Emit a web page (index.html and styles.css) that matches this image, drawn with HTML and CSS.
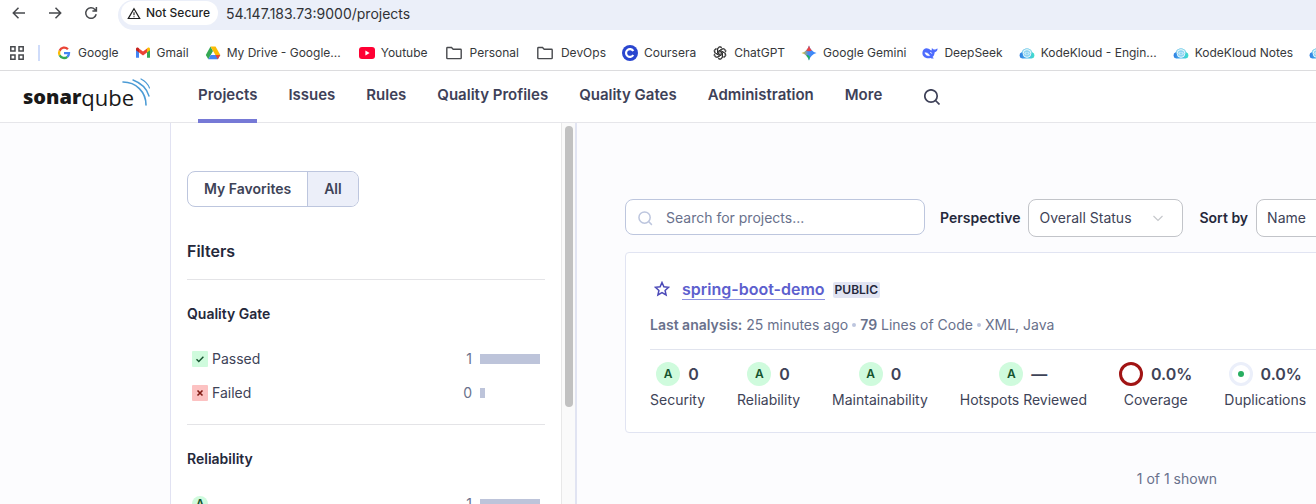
FILE: index.html
```html
<!DOCTYPE html>
<html lang="en">
<head>
<meta charset="utf-8">
<title>Projects</title>
<link rel="stylesheet" href="styles.css">
</head>
<body>
<svg class="defs" aria-hidden="true">
  <defs>
    <linearGradient id="cloud" x1="0" x2="1" y1="0" y2="0"><stop offset="0" stop-color="#2f7de0"/><stop offset=".5" stop-color="#46b4ee"/><stop offset="1" stop-color="#3fe0c8"/></linearGradient>
    <linearGradient id="gem" x1="0" x2="1" y1="0" y2="0"><stop offset="0" stop-color="#f9c80e"/><stop offset=".45" stop-color="#4a8af0"/><stop offset="1" stop-color="#3186ff"/></linearGradient>
    <symbol id="kode" viewBox="0 0 16 16"><path d="M3.300 13.500A3.200 3.200 0 0 1 2.700 7.300C3.500 5 5.500 3.500 8 3.500s4.500 1.500 5.300 3.800a3.200 3.200 0 0 1-.6 6.200z" fill="url(#cloud)"/><path d="M2.700 7.300C3.500 5 5.500 3.500 8 3.500s4.500 1.500 5.300 3.800l-1.300.7H4z" fill="#8fd9ea"/><circle cx="8" cy="8.500" r="3.900" fill="#8fd4f2" stroke="#fff" stroke-width=".8"/><path d="M7.200 7.200 6 8.500l1.200 1.300M8.800 7.200 10 8.500 8.800 9.800" fill="none" stroke="#fff" stroke-width=".9"/></symbol>
    <symbol id="folder" viewBox="0 0 16 16"><path d="M.8 3.200q0-.7.7-.7h4l1.700 1.700h7.300q.7 0 .7.7v8q0 .7-.7.7h-13q-.7 0-.7-.7z" fill="none" stroke="#47494d" stroke-width="1.400"/></symbol>
  </defs>
</svg>

<div class="toolbar">
  <div class="toolbar-buttons">
    <button class="tool" aria-label="Back"><svg viewBox="0 0 16 16"><path d="M14 8H2.500M7.500 2.800 2.300 8l5.200 5.200"/></svg></button>
    <button class="tool" aria-label="Forward"><svg viewBox="0 0 16 16"><path d="M2 8h11.500M8.500 2.800 13.700 8l-5.200 5.200"/></svg></button>
    <button class="tool" aria-label="Reload"><svg viewBox="0 0 16 16"><path d="M13.200 9.300A5.300 5.300 0 1 1 11.900 4.400L13.300 5.800M13.400 2v4H9.400"/></svg></button>
  </div>
  <div class="address">
    <button class="security"><svg viewBox="0 0 16 14"><path d="M8 1.600 14.500 12.700h-13z" fill="none" stroke="#1f1f1f" stroke-width="1.400"/><path d="M8 5.500v3.500M8 10v1.400" stroke="#1f1f1f" stroke-width="1.300"/></svg>Not Secure</button>
    <input class="url" type="text" aria-label="Address" value="54.147.183.73:9000/projects">
  </div>
</div>

<nav class="bookmarks" aria-label="Bookmarks">
  <div class="apps-group">
    <button class="apps" aria-label="Apps"><svg viewBox="0 0 14 14"><path d="M.8.8h4.200v4.200H.8zM9 .8h4.200v4.200H9zM.8 9h4.200v4.200H.8zM9 9h4.200v4.200H9z" fill="none" stroke="#47494d" stroke-width="1.500"/></svg></button>
    <span class="apps-rule"></span>
  </div>
  <a href="#" class="bookmark"><svg viewBox="0 0 16 16"><g fill="none" stroke-width="2.300"><path d="M11.900 4.300A5 5 0 0 0 3.600 5.700" stroke="#ea4335"/><path d="M3.600 5.700a5 5 0 0 0 0 4.600" stroke="#fbbc05"/><path d="M3.600 10.300a5 5 0 0 0 7.700 1.500" stroke="#34a853"/><path d="M11.300 11.800A5 5 0 0 0 13 8.200H8" stroke="#4285f4"/></g></svg>Google</a>
  <a href="#" class="bookmark"><svg viewBox="0 0 16 16"><path d="M1 3.500v9.300h3V7z" fill="#4285f4"/><path d="M15 3.500v9.300h-3V7z" fill="#34a853"/><path d="M4 7.500v-4l4 3 4-3v4l-4 3z" fill="#ea4335"/><path d="M1 5.200V4c0-1.300 1.500-1.900 2.500-1.100l.5.400v4.200z" fill="#c5221f"/><path d="M15 5.200V4c0-1.300-1.500-1.900-2.500-1.100l-.5.400v4.200z" fill="#fbbc04"/></svg>Gmail</a>
  <a href="#" class="bookmark"><svg viewBox="0 0 16 16"><path d="M5.500 1.500 8 6 3.300 14.200.8 10z" fill="#34a853"/><path d="M5.500 1.500h5L15.300 10h-4.900z" fill="#fbbc04"/><path d="M3.300 14.200 5.700 10h9.600l-2.500 4.200z" fill="#4285f4"/><path d="m10.400 10h4.900l-2.500 4.200z" fill="#ea4335"/></svg>My Drive - Google...</a>
  <a href="#" class="bookmark bookmark-spaced"><svg viewBox="0 0 16 16"><rect y="2" width="16" height="12" rx="3" fill="#ff0033"/><path d="M6.400 5.600 10.600 8l-4.200 2.400z" fill="#fff"/></svg>Youtube</a>
  <a href="#" class="bookmark bookmark-folder"><svg><use href="#folder"/></svg>Personal</a>
  <a href="#" class="bookmark bookmark-folder"><svg><use href="#folder"/></svg>DevOps</a>
  <a href="#" class="bookmark"><svg viewBox="0 0 16 16"><circle cx="8" cy="8" r="8" fill="#2a46cf"/><path d="M11.300 6A3.900 3.900 0 1 0 11.300 10" fill="none" stroke="#fff" stroke-width="2.200"/></svg>Coursera</a>
  <a href="#" class="bookmark"><svg viewBox="-1 -1 18 18"><g fill="none" stroke="#222" stroke-width=".9"><path id="petal" d="M5.300 8.800V4.300a2.800 2.800 0 0 1 5.200-1.400M6.600 9V5.700l3.900-2.300a2.800 2.800 0 0 1 4 3.300"/><use href="#petal" transform="rotate(60 8 8)"/><use href="#petal" transform="rotate(120 8 8)"/><use href="#petal" transform="rotate(180 8 8)"/><use href="#petal" transform="rotate(240 8 8)"/><use href="#petal" transform="rotate(300 8 8)"/></g></svg>ChatGPT</a>
  <a href="#" class="bookmark"><svg viewBox="0 0 16 16"><path d="M8 .5Q9.700 6.300 15.500 8 9.700 9.700 8 15.500 6.300 9.700.5 8 6.300 6.300 8 .5z" fill="url(#gem)"/><path d="M8 .5Q8.800 3.800 10.800 5.600 8 7 5.200 5.600 7.200 3.800 8 .5z" fill="#ea4343"/><path d="M8 15.500Q7.200 12.200 5.200 10.400 7 9 9 11.900 8.400 13.500 8 15.500z" fill="#22b35b"/></svg>Google Gemini</a>
  <a href="#" class="bookmark"><svg viewBox="0 0 16 16"><path d="M.4 8c0-3 2.300-4.900 5-4.600 2 .2 2.500 1.400 4 2.100.6-.6.200-1.500.5-2.500.8.600 1.100 1.300 2 1.500 1.300.3 2.200-.5 3.700-1-.1 2-1.100 3.400-2.900 3.700-.2 2.300-1 3.800-2.200 4.800l1.300 1.300c-1.300.5-2.400 0-3.300-.4C4.200 14.100.4 12 .4 8z" fill="#4d6bfe"/><path d="M2.900 7.700c2.300-.2 3.700 1.100 4.800 2.900-2.300.4-4.200-.7-4.800-2.900zM8 7.300c1.100 0 1.700.6 1.900 1.400" fill="#fff" stroke="#fff" stroke-width=".5"/></svg>DeepSeek</a>
  <a href="#" class="bookmark"><svg><use href="#kode"/></svg>KodeKloud - Engin...</a>
  <a href="#" class="bookmark"><svg><use href="#kode"/></svg>KodeKloud Notes</a>
  <a href="#" class="bookmark" aria-label="KodeKloud"><svg><use href="#kode"/></svg></a>
</nav>

<header class="header">
  <a href="#" class="logo"><b>sonar</b><span>qube</span><svg viewBox="0 0 28 30"><g fill="none" stroke="#4b9bd5" stroke-linecap="round"><path d="M1 4C14 4 24 14 24 27" stroke-width="1.600"/><path d="M11 2C19 5 25 11 27 18" stroke-width="1.400"/><path d="M19 1C23 3 26 6 27.500 10" stroke-width="1.200"/></g></svg></a>
  <nav class="menu" aria-label="Main">
    <a href="#" class="active" aria-current="page">Projects</a>
    <a href="#">Issues</a>
    <a href="#">Rules</a>
    <a href="#">Quality Profiles</a>
    <a href="#">Quality Gates</a>
    <a href="#">Administration</a>
    <a href="#">More</a>
  </nav>
  <button class="search-button" aria-label="Search"><svg viewBox="0 0 16 16"><circle cx="7" cy="7" r="6.200"/><path d="m11.500 11.500 4 4"/></svg></button>
</header>

<div class="page">
  <aside class="sidebar">
    <div class="filters">
      <div class="toggle"><button>My Favorites</button><button class="selected" aria-pressed="true">All</button></div>
      <h2>Filters</h2>
      <section class="facet">
        <h3>Quality Gate</h3>
        <button class="facet-row"><svg viewBox="0 0 16 16"><rect width="16" height="16" rx="1" fill="#cffbdd"/><path d="m4.500 8.200 2.300 2.300 4.600-4.700" fill="none" stroke="#14532d" stroke-width="1.400"/></svg><span class="name">Passed</span><span>1</span><span class="bar"><span style="width:100%"></span></span></button>
        <button class="facet-row"><svg viewBox="0 0 16 16"><rect width="16" height="16" rx="1" fill="#fcc2c2"/><path d="m5.500 5.500 5 5m0-5-5 5" stroke="#801b14" stroke-width="1.600"/></svg><span class="name">Failed</span><span>0</span><span class="bar"><span style="width:8%"></span></span></button>
      </section>
      <section class="facet">
        <h3>Reliability</h3>
        <button class="facet-row"><span class="rating rating-small">A</span><span class="name"></span><span>1</span><span class="bar"><span style="width:100%"></span></span></button>
      </section>
    </div>
    <div class="track"><div class="thumb"></div></div>
  </aside>

  <main class="content">
    <div class="controls">
      <div class="search"><svg viewBox="0 0 16 16"><circle cx="7" cy="7" r="6"/><path d="m11.300 11.300 3.500 3.500"/></svg><input type="search" placeholder="Search for projects..." aria-label="Search for projects"></div>
      <label for="perspective">Perspective</label>
      <div class="select"><select id="perspective"><option>Overall Status</option></select><svg viewBox="0 0 10 10"><path d="m.5 3 4.500 4.500L9.500 3"/></svg></div>
      <label for="sort">Sort by</label>
      <div class="select"><select id="sort"><option>Name</option></select><svg viewBox="0 0 10 10"><path d="m.5 3 4.500 4.500L9.500 3"/></svg></div>
    </div>
    <article class="card">
      <div class="title">
        <button class="star" aria-label="Favorite"><svg viewBox="0 0 16 16"><path d="m8 1.500 1.900 4.300 4.700.5-3.500 3.100 1 4.600L8 11.700 3.900 14l1-4.600L1.400 6.300l4.700-.5z"/></svg></button>
        <a href="#">spring-boot-demo</a>
        <span class="badge">PUBLIC</span>
      </div>
      <div class="meta"><span><b>Last analysis:</b> 25 minutes ago</span><i></i><span><b>79</b> Lines of Code</span><i></i><span>XML, Java</span></div>
      <div class="measures">
        <div class="measure"><div><span class="rating">A</span><b>0</b></div>Security</div>
        <div class="measure"><div><span class="rating">A</span><b>0</b></div>Reliability</div>
        <div class="measure"><div><span class="rating">A</span><b>0</b></div>Maintainability</div>
        <div class="measure"><div><span class="rating">A</span><b>—</b></div>Hotspots Reviewed</div>
        <div class="measure"><div><span class="ring"></span><b>0.0%</b></div>Coverage</div>
        <div class="measure"><div><span class="ring ring-dot"></span><b>0.0%</b></div>Duplications</div>
      </div>
    </article>
    <p class="count">1 of 1 shown</p>
  </main>
</div>
</body>
</html>
```
FILE: styles.css
```css
* { box-sizing: border-box; }
body { margin: 0; height: 100vh; overflow: hidden; display: flex; flex-direction: column; background: #fff; color: #3e4357; font: 14px/20px Inter, sans-serif; }
button, input, select { font: inherit; color: inherit; margin: 0; padding: 0; border: 0; background: none; }
a { color: inherit; text-decoration: none; }
svg { display: block; flex: none; }
b { font-weight: 600; }
.defs { position: absolute; width: 0; height: 0; }

.toolbar { display: flex; flex: none; height: 30px; }
.toolbar-buttons { display: flex; gap: 20px; width: 118px; height: 26px; align-items: center; padding-left: 11px; }
.tool svg { width: 16px; height: 16px; fill: none; stroke: #47494d; stroke-width: 1.5; }
.address { flex: 1; display: flex; align-items: flex-start; gap: 8px; padding-left: 3px; background: #ebeff9; border-radius: 15px 0 0 15px; }
.security { display: flex; align-items: center; gap: 5px; height: 24px; margin-top: 1px; padding: 0 8px 0 6px; border-radius: 12px; background: #fff; color: #1f1f1f; font-size: 12px; font-weight: 500; }
.security svg { width: 14px; height: 13px; }
.url { flex: 1; height: 26px; color: #303236; font-size: 14px; }

.bookmarks { display: flex; flex: none; align-items: center; gap: 16px; height: 41px; padding: 5px 0 0 10px; border-bottom: 1px solid #dcdcde; color: #36383b; font-size: 12px; white-space: nowrap; overflow: hidden; }
.apps-group { display: flex; flex: none; align-items: center; gap: 14px; }
.apps svg { width: 14px; height: 14px; }
.apps-rule { width: 2px; height: 16px; background: #cfdcfa; }
.bookmark { display: flex; flex: none; align-items: center; gap: 6px; }
.bookmark svg { width: 16px; height: 16px; }
.bookmark-spaced { margin-left: 2px; }
.bookmark-folder { gap: 8px; margin-left: 2px; }

.header { display: flex; flex: none; height: 52px; border-bottom: 1px solid #e6e6ea; padding-left: 23px; }
.logo { display: flex; align-items: center; width: 175px; color: #191919; font: 22px/24px "Open Sans", sans-serif; }
.logo b { font-size: 20px; font-weight: 800; }
.logo svg { width: 28px; height: 30px; margin: 0 0 8px -12px; }
.menu { display: flex; gap: 31px; }
.menu a { display: flex; align-items: center; height: 52px; border-bottom: 4px solid transparent; color: #3e4158; font-size: 15px; font-weight: 600; }
.menu .active { border-color: #7679d6; }
.search-button { margin-left: 42px; color: #3e4158; }
.search-button svg { width: 16px; height: 16px; fill: none; stroke: currentColor; stroke-width: 1.7; }

.page { display: flex; flex: 1; min-height: 0; padding-left: 170px; overflow: hidden; background: #fcfcfe; }
.sidebar { display: flex; flex: none; width: 407px; overflow: hidden; background: #fff; border-left: 1px solid #e1e2f2; border-right: 2px solid #e1e4f2; }
.filters { flex: 1; padding: 48px 16px 0; }
.track { width: 14px; border-left: 1px solid #e8e8e8; background: #fafafa; padding: 3px 2px 0 3px; }
.thumb { width: 8px; height: 281px; border-radius: 4px; background: #c1c1c1; }
.toggle { display: inline-flex; overflow: hidden; height: 36px; border: 1px solid #bdc6de; border-radius: 8px; vertical-align: top; }
.toggle button { padding: 0 16px; font-weight: 600; }
.toggle .selected { background: #eceff9; border-left: 1px solid #bdc6de; }
h2 { margin: 32px 0 16px; color: #25283b; font-size: 16px; line-height: 24px; font-weight: 600; }
.facet { border-top: 1px solid #e4e4e7; padding: 24px 0 14px; }
h3 { margin: 0 0 18px; color: #25283b; font-size: 14px; font-weight: 600; }
.facet-row { display: flex; align-items: center; width: 100%; height: 34px; padding: 0 5px; color: #69718c; text-align: left; }
.facet-row svg { width: 16px; height: 16px; }
.name { flex: 1; padding-left: 4px; color: #3e4357; }
.bar { width: 60px; height: 10px; margin-left: 8px; }
.bar span { display: block; height: 100%; background: #bdc4da; }
.rating { display: flex; align-items: center; justify-content: center; width: 24px; height: 24px; border-radius: 50%; background: #cffbdd; color: #14532d; font-size: 12px; font-weight: 600; }
.rating-small { width: 16px; height: 16px; }

.content { flex: none; width: 1152px; padding: 76px 0 0 48px; }
.controls { display: flex; align-items: flex-start; gap: 8px; height: 38px; color: #3e4357; }
.search { display: flex; align-items: center; gap: 13px; width: 300px; height: 36px; margin-right: 7px; padding: 2px 12px 0; border: 1px solid #bdc6de; border-radius: 8px; background: #fff; }
.search svg { width: 15px; height: 15px; fill: none; stroke: #bdc6de; stroke-width: 1.6; }
.search input { flex: 1; min-width: 0; outline: 0; }
.search input::placeholder { color: #69718c; opacity: 1; }
.controls label { line-height: 38px; color: #25283b; font-weight: 600; }
.select { position: relative; width: 155px; height: 38px; margin-right: 8px; }
.select select { appearance: none; width: 100%; height: 38px; padding: 0 10px; border: 1px solid #c2c4c9; border-radius: 8px; background: #fff; }
.select svg { position: absolute; right: 20px; top: 14px; width: 10px; height: 10px; fill: none; stroke: #c6c8cc; stroke-width: 1.2; }
.card { margin-top: 15px; padding: 24px 24px 22px; border: 1px solid #e1e4f2; border-radius: 4px; background: #fff; }
.title { display: flex; align-items: center; gap: 8px; height: 24px; }
.star { width: 24px; display: flex; justify-content: center; }
.star svg { width: 16px; height: 16px; fill: none; stroke: #4b49b8; stroke-width: 1.5; }
.title a { line-height: 20px; border-bottom: 1px solid #8f93e0; color: #5d5fce; font-size: 16px; font-weight: 600; }
.badge { margin-top: 2px; padding: 0 2px; border-radius: 2px; background: #e1e4f2; color: #25283b; font-size: 12px; line-height: 16px; font-weight: 600; }
.meta { display: flex; align-items: center; gap: 4px; margin: 14px 0; color: #69718c; }
.meta i { width: 4px; height: 4px; border-radius: 50%; background: #bdc6de; }
.measures { display: flex; gap: 32px; padding-top: 12px; border-top: 1px solid #e1e4ee; }
.measure { text-align: center; }
.measure > div { display: flex; align-items: center; justify-content: center; gap: 8px; height: 24px; margin-bottom: 4px; }
.measure b { font-size: 16px; }
.ring { width: 24px; height: 24px; border: 3px solid #a11414; border-radius: 50%; }
.ring-dot { display: flex; align-items: center; justify-content: center; border-color: #ebeffa; }
.ring-dot::after { content: ""; width: 6px; height: 6px; border-radius: 50%; background: #27ae60; }
.count { margin: 36px 0 0; color: #69718c; text-align: center; }
```
